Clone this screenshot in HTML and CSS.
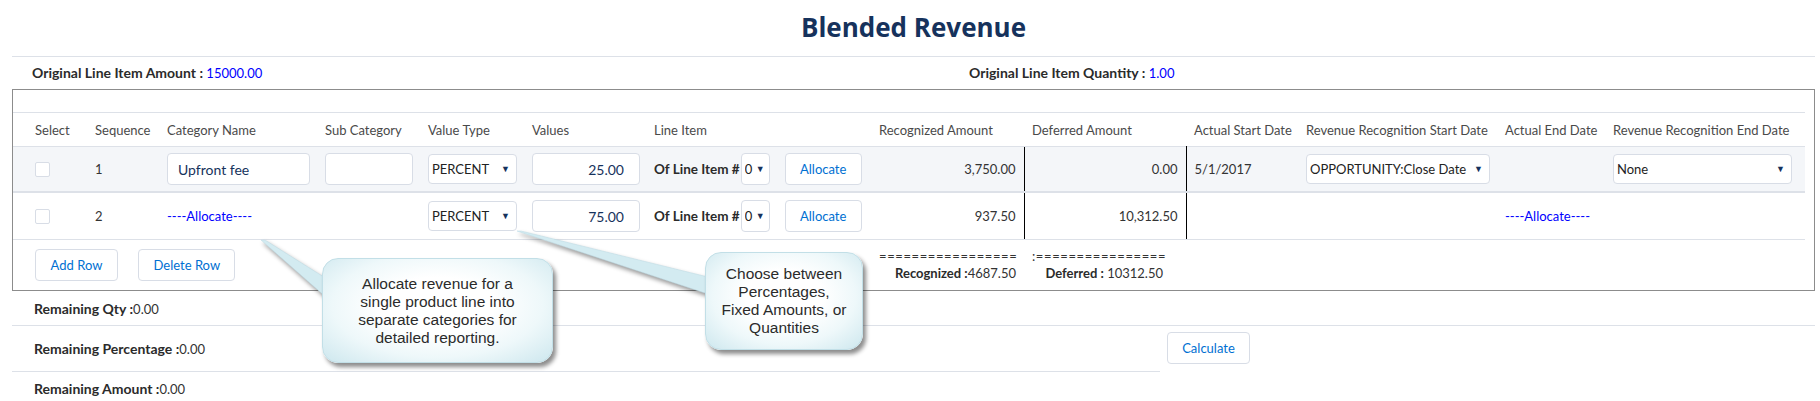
FILE: index.html
```html
<!DOCTYPE html>
<html lang="en">
<head>
    <meta charset="UTF-8">
    <title>Blended Revenue</title>
    <link rel="stylesheet" href="styles.css">
</head>
<body>
    <div class="page">
        <h1 class="title">Blended Revenue</h1>

        <div class="summary">
            <div><b>Original Line Item Amount :</b> <span class="blue">15000.00</span></div>
            <div><b>Original Line Item Quantity :</b> <span class="blue">1.00</span></div>
        </div>

        <div class="box">
            <table class="lines">
                <colgroup>
                    <col style="width:74px">
                    <col style="width:72px">
                    <col style="width:158px">
                    <col style="width:103px">
                    <col style="width:104px">
                    <col style="width:122px">
                    <col style="width:225px">
                    <col style="width:153px">
                    <col style="width:162px">
                    <col style="width:112px">
                    <col style="width:199px">
                    <col style="width:108px">
                    <col style="width:200px">
                </colgroup>
                <thead>
                    <tr>
                        <th class="first">Select</th>
                        <th>Sequence</th>
                        <th>Category Name</th>
                        <th>Sub Category</th>
                        <th>Value Type</th>
                        <th>Values</th>
                        <th>Line Item</th>
                        <th>Recognized Amount</th>
                        <th>Deferred Amount</th>
                        <th>Actual Start Date</th>
                        <th>Revenue Recognition Start Date</th>
                        <th>Actual End Date</th>
                        <th>Revenue Recognition End Date</th>
                    </tr>
                </thead>
                <tbody>
                    <tr class="shaded">
                        <td class="first"><input type="checkbox" class="check"></td>
                        <td>1</td>
                        <td><input class="field cat" type="text" value="Upfront fee"></td>
                        <td><input class="field sub" type="text" value=""></td>
                        <td><span class="select vtype"><select><option>PERCENT</option></select></span></td>
                        <td><input class="field amount" type="text" value="25.00"></td>
                        <td>
                            <div class="line-item">
                                <b>Of Line Item #</b>
                                <span class="select num-pick"><select><option>0</option></select></span>
                                <button class="btn btn-allocate">Allocate</button>
                            </div>
                        </td>
                        <td class="num">3,750.00</td>
                        <td class="num deferred">0.00</td>
                        <td>5/1/2017</td>
                        <td><span class="select start-pick"><select><option>OPPORTUNITY:Close Date</option></select></span></td>
                        <td></td>
                        <td><span class="select end-pick"><select><option>None</option></select></span></td>
                    </tr>
                    <tr class="plain">
                        <td class="first"><input type="checkbox" class="check"></td>
                        <td>2</td>
                        <td class="link">----Allocate----</td>
                        <td></td>
                        <td><span class="select vtype"><select><option>PERCENT</option></select></span></td>
                        <td><input class="field amount" type="text" value="75.00"></td>
                        <td>
                            <div class="line-item">
                                <b>Of Line Item #</b>
                                <span class="select num-pick"><select><option>0</option></select></span>
                                <button class="btn btn-allocate">Allocate</button>
                            </div>
                        </td>
                        <td class="num">937.50</td>
                        <td class="num deferred">10,312.50</td>
                        <td></td>
                        <td></td>
                        <td class="link">----Allocate----</td>
                        <td></td>
                    </tr>
                </tbody>
                <tfoot>
                    <tr>
                        <td colspan="7" class="actions">
                            <button class="btn btn-add">Add Row</button>
                            <button class="btn btn-delete">Delete Row</button>
                        </td>
                        <td class="total"><span class="rule">=================</span><br><b>Recognized :</b>4687.50</td>
                        <td class="total total-deferred"><span class="rule">:================</span><br><b>Deferred :</b> 10312.50</td>
                        <td colspan="4"></td>
                    </tr>
                </tfoot>
            </table>
        </div>

        <table class="remaining">
            <tr class="rem-qty">
                <td colspan="2"><b>Remaining Qty :</b>0.00</td>
            </tr>
            <tr class="rem-pct">
                <td class="label"><b>Remaining Percentage :</b>0.00</td>
                <td class="calc" rowspan="2"><button class="btn btn-calc">Calculate</button></td>
            </tr>
            <tr class="rem-amt">
                <td class="label"><b>Remaining Amount :</b>0.00</td>
            </tr>
        </table>

        <svg class="pointers" width="1820" height="401" viewBox="0 0 1820 401">
            <polygon points="261,240 265,240 327,279 327,298" />
            <polygon points="517,231 521,231 708,277 708,294" />
        </svg>
        <div class="callout callout-allocate">Allocate revenue for a<br>single product line into<br>separate categories for<br>detailed reporting.</div>
        <div class="callout callout-choose">Choose between<br>Percentages,<br>Fixed Amounts, or<br>Quantities</div>
    </div>
</body>
</html>
```

FILE: styles.css
```css
body {
    margin: 0;
    background: #fff;
    font-family: Lato, "Open Sans", sans-serif;
    font-size: 13px;
    color: #333;
}
.page {
    position: relative;
    padding: 0 5px 0 12px;
}
.title {
    margin: 0;
    padding: 11px 0 13px;
    line-height: 32px;
    font-family: "Open Sans", Lato, sans-serif;
    font-size: 26px;
    font-weight: 700;
    color: #16325c;
    text-align: center;
    border-bottom: 1px solid #dde1e8;
}
.summary {
    display: grid;
    grid-template-columns: 937px 1fr;
    height: 32px;
    line-height: 32px;
}
.summary div {
    padding-left: 20px;
}
b {
    font-weight: 700;
    color: #2b2b2b;
}
.summary b,
.remaining b {
    font-size: 14px;
}
.blue {
    color: #0000ff;
}
.box {
    border: 1px solid #8c8c8c;
}
.lines {
    width: 1792px;
    margin-top: 22px;
    border-collapse: collapse;
    table-layout: fixed;
}
.lines th {
    height: 33px;
    padding: 0 8px;
    text-align: left;
    font-weight: 400;
    color: #4a4a4a;
    white-space: nowrap;
    border-top: 1px solid #dde1e8;
}
.lines td {
    padding: 0 8px;
    white-space: nowrap;
    vertical-align: middle;
}
.lines .first {
    padding-left: 22px;
}
.shaded td {
    height: 44px;
    background: #f4f6f9;
    border-top: 1px solid #dde1e8;
    border-bottom: 2px solid #dde1e8;
}
.plain td {
    height: 46px;
    border-bottom: 1px solid #dde1e8;
}
.lines td.num {
    text-align: right;
}
.lines td.deferred {
    border-left: 1px solid #000;
    border-right: 1px solid #000;
}
.link {
    color: #0000ff;
}
.check {
    appearance: none;
    display: block;
    width: 15px;
    height: 15px;
    margin: 0;
    border: 1px solid #d8dde6;
    border-radius: 2px;
    background: #fff;
}
.field {
    display: block;
    box-sizing: border-box;
    height: 32px;
    padding: 0 10px;
    border: 1px solid #d8dde6;
    border-radius: 4px;
    background: #fff;
    font-family: inherit;
    font-size: 14px;
    color: #16325c;
}
.field.cat {
    width: 143px;
}
.field.sub {
    width: 88px;
}
.field.amount {
    width: 108px;
    padding-right: 15px;
    text-align: right;
}
.select {
    position: relative;
    display: inline-block;
}
.select select {
    appearance: none;
    display: block;
    box-sizing: border-box;
    width: 100%;
    height: 30px;
    padding: 0 14px 0 3px;
    border: 1px solid #d8dde6;
    border-radius: 4px;
    background: #fff;
    font-family: inherit;
    font-size: 13px;
    color: #222;
}
.select::after {
    content: "\25BC";
    position: absolute;
    right: 7px;
    top: 9px;
    font-size: 9px;
    color: #16325c;
    pointer-events: none;
}
.vtype {
    width: 89px;
}
.num-pick {
    width: 29px;
}
.num-pick select {
    height: 32px;
}
.num-pick::after {
    right: 5px;
    top: 10px;
}
.start-pick {
    width: 184px;
}
.end-pick {
    width: 179px;
}
.line-item {
    display: flex;
    align-items: center;
}
.line-item b {
    margin-right: 1px;
    font-size: 13.5px;
}
.btn {
    box-sizing: border-box;
    height: 32px;
    padding: 0;
    border: 1px solid #d8dde6;
    border-radius: 4px;
    background: #fff;
    font-family: inherit;
    font-size: 13px;
    color: #0070d2;
}
.btn-allocate {
    width: 77px;
    margin-left: 15px;
}
.btn-add {
    width: 83px;
}
.btn-delete {
    width: 97px;
    margin-left: 17px;
}
.btn-calc {
    width: 83px;
}
.lines tfoot td {
    height: 41px;
    vertical-align: top;
}
.lines td.actions {
    padding-top: 9px;
    padding-left: 22px;
}
.lines td.total {
    padding-top: 8px;
    line-height: 17px;
    text-align: right;
    color: #333;
}
.lines td.total-deferred {
    padding-right: 23px;
}
.rule {
    letter-spacing: 0.6px;
    margin-right: -0.6px;
}
.remaining {
    width: 100%;
    border-collapse: collapse;
}
.remaining td {
    padding: 0 0 0 22px;
}
.rem-qty td {
    height: 34px;
    border-bottom: 1px solid #dde1e8;
}
.rem-pct td.label {
    width: 1126px;
    height: 45px;
    border-bottom: 1px solid #dde1e8;
}
.rem-amt td.label {
    height: 32px;
}
.remaining td.calc {
    vertical-align: top;
    padding: 6px 0 0 7px;
}
.pointers {
    position: absolute;
    left: 0;
    top: 0;
    z-index: 1;
    pointer-events: none;
    filter: drop-shadow(2px 3px 2px rgba(0, 0, 0, 0.4));
}
.pointers polygon {
    fill: #d3ebf1;
    stroke: #bddbe4;
    stroke-width: 0.5;
}
.callout {
    position: absolute;
    z-index: 2;
    box-sizing: border-box;
    display: flex;
    align-items: center;
    justify-content: center;
    border: 1px solid #c2dfe7;
    border-radius: 16px;
    background: radial-gradient(ellipse at 50% 45%, #ffffff 35%, #eef8fa 65%, #cde7ee 100%);
    box-shadow: 3px 4px 4px rgba(0, 0, 0, 0.45);
    font-family: "Liberation Sans", Arial, sans-serif;
    font-size: 15.5px;
    line-height: 18px;
    color: #2b2b2b;
    text-align: center;
}
.callout-allocate {
    left: 322px;
    top: 258px;
    width: 231px;
    height: 105px;
}
.callout-choose {
    left: 705px;
    top: 252px;
    width: 158px;
    height: 98px;
}
```
